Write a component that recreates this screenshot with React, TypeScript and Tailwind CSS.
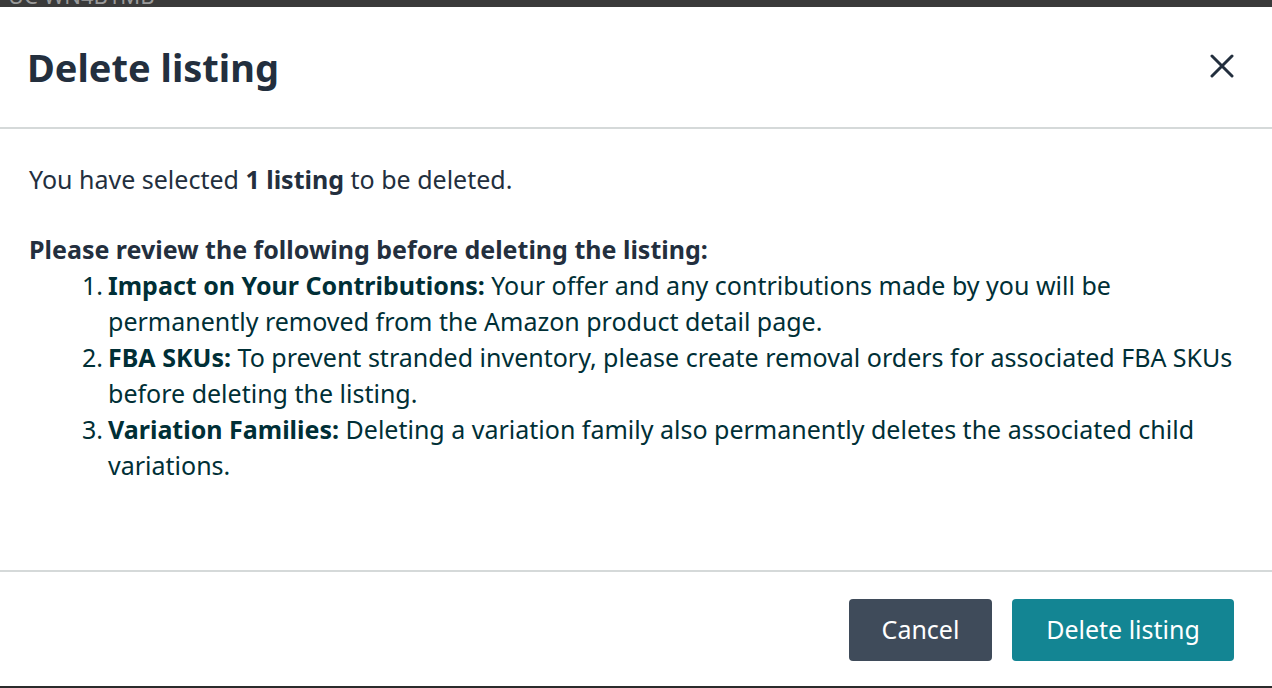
const items = [
  {
    title: "Impact on Your Contributions:",
    text: "Your offer and any contributions made by you will be permanently removed from the Amazon product detail page.",
  },
  {
    title: "FBA SKUs:",
    text: "To prevent stranded inventory, please create removal orders for associated FBA SKUs before deleting the listing.",
  },
  {
    title: "Variation Families:",
    text: "Deleting a variation family also permanently deletes the associated child variations.",
  },
];

export default function App() {
  return (
    <div
      className="flex h-[688px] w-[1272px] flex-col overflow-hidden bg-white"
      style={{ fontFamily: '"Noto Sans", "Open Sans", sans-serif' }}
    >
      {/* page behind the modal, barely visible */}
      <div className="h-[7px] shrink-0 overflow-hidden bg-[#3a3a3a]">
        <div className="-mt-[16px] pl-[8px] text-[22px] leading-[22px] text-[#9a9a9a]">UC WN4B1MB</div>
      </div>

      <div className="flex h-[122px] shrink-0 items-center justify-between border-b-2 border-[#d5d9d9] pl-[27px] pr-[38px]">
        <h1 className="mt-[1px] text-[38px] font-bold text-[#232f3e]">Delete listing</h1>
        <button className="-mt-[2px] text-[#232f3e]">
          <svg width="24" height="24" viewBox="0 0 24 24" fill="none" stroke="currentColor" strokeWidth="3" strokeLinecap="round">
            <path d="M2 2L22 22M22 2L2 22" />
          </svg>
        </button>
      </div>

      <div className="flex-1 pl-[29px] pr-[20px] pt-[32px] text-[25px] leading-[36px]">
        <p className="text-[#232f3e]">
          You have selected <span className="font-bold">1 listing</span> to be deleted.
        </p>
        <p className="mt-[34px] font-bold text-[#232f3e]">Please review the following before deleting the listing:</p>
        <ol className="text-[#002f36]">
          {items.map((item, i) => (
            <li key={item.title} className="flex">
              <span className="w-[79px] shrink-0 pl-[53px]">{i + 1}.</span>
              <span className="max-w-[1136px]">
                <span className="font-bold">{item.title}</span> {item.text}
              </span>
            </li>
          ))}
        </ol>
      </div>

      <div className="flex h-[116px] shrink-0 items-start justify-end gap-[20px] border-t-2 border-[#d5d9d9] pr-[38px] pt-[27px]">
        <button className="h-[62px] w-[143px] rounded-[4px] bg-[#3f4b5a] text-[25px] text-white">Cancel</button>
        <button className="h-[62px] w-[222px] rounded-[4px] bg-[#138593] text-[25px] text-white">Delete listing</button>
      </div>

      <div className="h-[2px] shrink-0 bg-[#2b2b2b]" />
    </div>
  );
}
